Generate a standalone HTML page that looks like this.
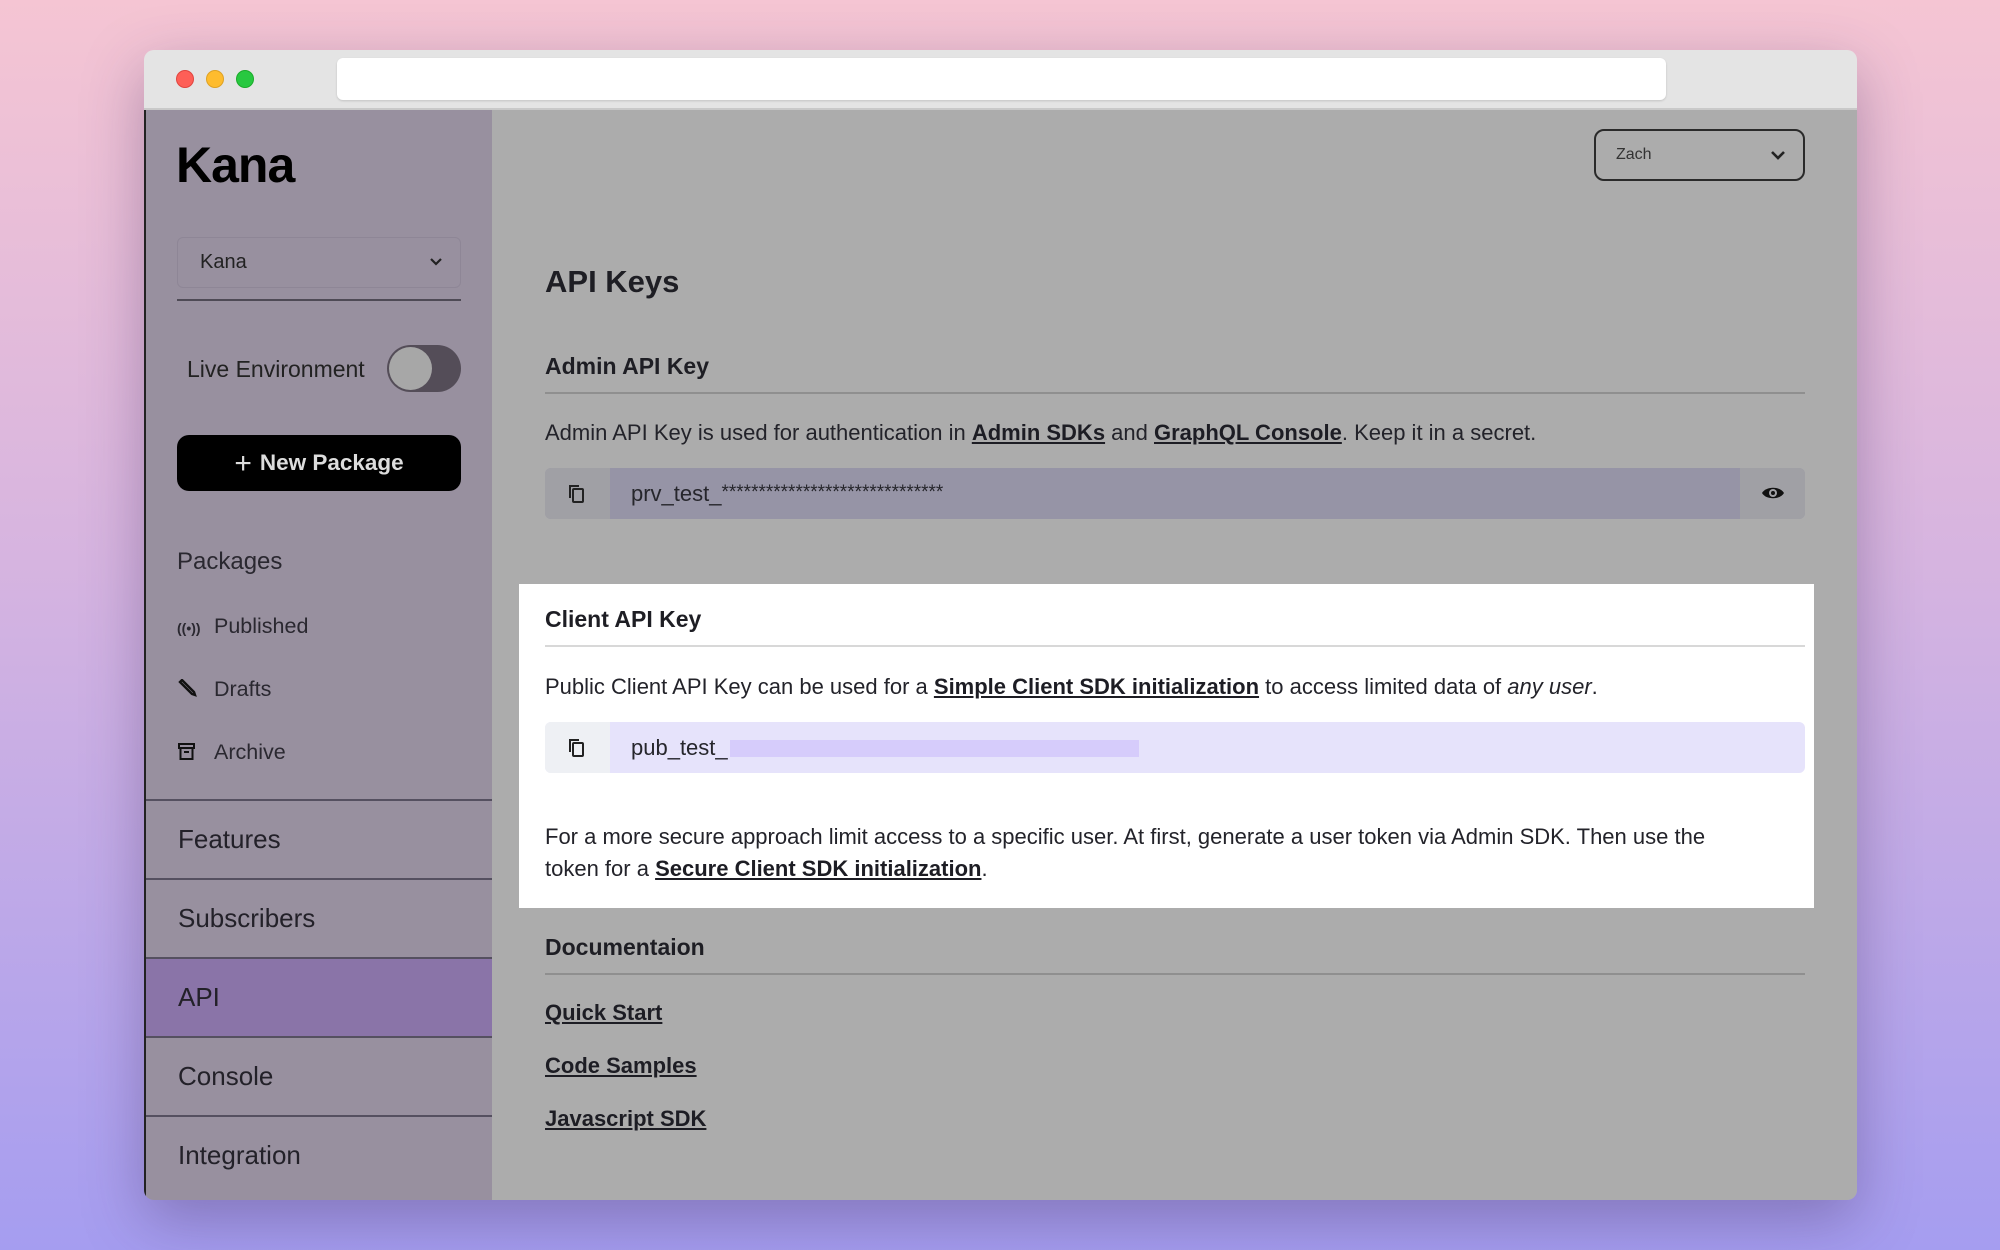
<!DOCTYPE html>
<html><head><meta charset="utf-8"><style>
*{margin:0;padding:0;box-sizing:border-box}
body{width:2000px;height:1250px;overflow:hidden;font-family:"Liberation Sans",sans-serif;background:linear-gradient(180deg,#f5c5d3 0%,#d6b4e0 45%,#a59df0 100%);position:relative;color:#1d1d24}
.win{position:absolute;left:144px;top:50px;width:1713px;height:1150px;border-radius:10px;overflow:hidden;box-shadow:0 20px 60px rgba(60,40,90,.35)}
.bar{position:absolute;left:0;top:0;width:100%;height:60px;background:#e4e4e4;border-bottom:2px solid #c9c9c9}
.dot{position:absolute;top:20px;width:18px;height:18px;border-radius:50%}
.url{position:absolute;left:193px;top:8px;width:1329px;height:42px;background:#fff;border-radius:6px;box-shadow:0 1px 2px rgba(0,0,0,.15)}
.side{position:absolute;left:0;top:60px;width:348px;height:1090px;background:#98909f;border-left:2px solid #222}
.main{position:absolute;left:348px;top:60px;width:1365px;height:1090px;background:#acacac}
.abs{position:absolute}
.nav{position:absolute;left:0;width:348px;height:79px;border-top:2px solid #555060;font-size:26px;padding-left:32px;line-height:77px;color:#232129}
.line{position:absolute;height:2px;background:#8f8f8f}
a{color:#1d1d24;font-weight:bold;text-decoration:underline}
.p{position:absolute;font-size:22px;color:#23232a;white-space:nowrap}
</style></head><body>
<div class="win">
 <div class="bar">
  <div class="dot" style="left:32px;background:#fe5f57;border:1px solid #e0443e"></div>
  <div class="dot" style="left:62px;background:#febc2e;border:1px solid #dea123"></div>
  <div class="dot" style="left:92px;background:#28c840;border:1px solid #1aab29"></div>
  <div class="url"></div>
 </div>
 <div class="side">
  <div class="abs" style="left:30px;top:26px;font-size:50px;font-weight:bold;color:#000;letter-spacing:-1px">Kana</div>
  <div class="abs" style="left:31px;top:127px;width:284px;height:51px;border:1px solid #8e8696;border-radius:6px;font-size:20px;padding-left:22px;line-height:49px;color:#222">Kana
   <svg style="position:absolute;right:16px;top:18px" width="16" height="12" viewBox="0 0 16 12"><path d="M3 3l5 5 5-5" stroke="#222" stroke-width="2.2" fill="none"/></svg></div>
  <div class="abs" style="left:31px;top:189px;width:284px;height:2px;background:#4e4a55"></div>
  <div class="abs" style="left:41px;top:246px;font-size:23px;color:#222">Live Environment</div>
  <div class="abs" style="left:241px;top:235px;width:74px;height:47px;border-radius:24px;background:#544d58"><div style="position:absolute;left:2px;top:2px;width:43px;height:43px;border-radius:50%;background:#a7a7a7"></div></div>
  <div class="abs" style="left:31px;top:325px;width:284px;height:56px;border-radius:12px;background:#000;color:#ddd;font-size:22.5px;font-weight:bold;text-align:center;line-height:56px"><span style="font-weight:normal;font-size:30px;vertical-align:-3px;margin-right:8px">+</span>New Package</div>
  <div class="abs" style="left:31px;top:438px;font-size:24px;color:#2a2830">Packages</div>
  <div class="abs" style="left:31px;top:504px;font-size:21.5px;color:#2a2830"><span style="font-size:14px;font-weight:bold;display:inline-block;width:37px">((•))</span>Published</div>
  <div class="abs" style="left:31px;top:567px;font-size:21.5px;color:#2a2830"><svg width="37" height="20" viewBox="0 0 37 20" style="vertical-align:-3px"><path d="M3 3l12 12 3 1-1-3L5 1z" fill="none" stroke="#111" stroke-width="2.4"/></svg>Drafts</div>
  <div class="abs" style="left:31px;top:630px;font-size:21.5px;color:#2a2830"><svg width="37" height="20" viewBox="0 0 37 20" style="vertical-align:-3px"><rect x="2" y="2" width="15" height="4" fill="none" stroke="#111" stroke-width="2"/><rect x="3.5" y="6" width="12" height="11" fill="none" stroke="#111" stroke-width="2"/><path d="M7 10h5" stroke="#111" stroke-width="2"/></svg>Archive</div>
  <div class="nav" style="top:689px">Features</div>
  <div class="nav" style="top:768px">Subscribers</div>
  <div class="nav" style="top:847px;background:#8a74a8">API</div>
  <div class="nav" style="top:926px">Console</div>
  <div class="nav" style="top:1005px">Integration</div>
 </div>
 <div class="main">
  <div class="abs" style="left:1102px;top:19px;width:211px;height:52px;border:2px solid #2a2a2a;border-radius:10px;font-size:16px;padding-left:20px;line-height:48px;color:#333">Zach
   <svg style="position:absolute;right:16px;top:18px" width="18" height="12" viewBox="0 0 18 12"><path d="M3 3l6 6 6-6" stroke="#222" stroke-width="2.6" fill="none"/></svg></div>
  <div class="abs" style="left:53px;top:154px;font-size:31px;font-weight:bold;color:#1e1e24">API Keys</div>
  <div class="abs" style="left:53px;top:243px;font-size:23px;font-weight:bold;color:#1e1e24">Admin API Key</div>
  <div class="line" style="left:53px;top:282px;width:1260px"></div>
  <div class="p" style="left:53px;top:310px">Admin API Key is used for authentication in <a>Admin SDKs</a> and <a>GraphQL Console</a>. Keep it in a secret.</div>
  <div class="abs" style="left:53px;top:358px;width:1260px;height:51px;border-radius:6px;background:#9694a6;overflow:hidden">
   <div class="abs" style="left:0;top:0;width:65px;height:51px;background:#a0a0a5"></div>
   <div class="abs" style="right:0;top:0;width:65px;height:51px;background:#a0a0a5"></div>
   <svg class="abs" style="left:22px;top:15px" width="20" height="22" viewBox="0 0 20 22"><path d="M3 15V3h9" stroke="#222" stroke-width="2" fill="none"/><rect x="6" y="6" width="10" height="13" rx="1" fill="none" stroke="#222" stroke-width="2"/></svg>
   <svg class="abs" style="right:20px;top:17px" width="24" height="16" viewBox="0 0 24 16"><path d="M1 8C5 1 19 1 23 8 19 15 5 15 1 8z" fill="#111"/><circle cx="12" cy="8" r="4" fill="#a0a0a5"/><circle cx="12" cy="8" r="2" fill="#111"/></svg>
   <div class="abs" style="left:86px;top:13px;font-size:22px;color:#26262c">prv_test_<span style="font-size:19px;vertical-align:3px">******************************</span></div>
  </div>
  <div class="abs" style="left:27px;top:474px;width:1295px;height:324px;background:#fff"></div>
  <div class="abs" style="left:53px;top:496px;font-size:23px;font-weight:bold;color:#1e1e24">Client API Key</div>
  <div class="abs" style="left:53px;top:535px;width:1260px;height:2px;background:#d8d8d8"></div>
  <div class="p" style="left:53px;top:564px">Public Client API Key can be used for a <a>Simple Client SDK initialization</a> to access limited data of <i>any user</i>.</div>
  <div class="abs" style="left:53px;top:612px;width:1260px;height:51px;border-radius:6px;background:#e6e3fb;overflow:hidden">
   <div class="abs" style="left:0;top:0;width:65px;height:51px;background:#eef0f4"></div>
   <svg class="abs" style="left:22px;top:15px" width="20" height="22" viewBox="0 0 20 22"><path d="M3 15V3h9" stroke="#222" stroke-width="2" fill="none"/><rect x="6" y="6" width="10" height="13" rx="1" fill="none" stroke="#222" stroke-width="2"/></svg>
   <div class="abs" style="left:86px;top:13px;font-size:22px;color:#26262c">pub_test_</div>
   <div class="abs" style="left:185px;top:18px;width:409px;height:17px;background:#d6ccfb"></div>
  </div>
  <div class="p" style="left:53px;top:711px;line-height:32px">For a more secure approach limit access to a specific user. At first, generate a user token via Admin SDK. Then use the<br>token for a <a>Secure Client SDK initialization</a>.</div>
  <div class="abs" style="left:53px;top:824px;font-size:23px;font-weight:bold;color:#1e1e24">Documentaion</div>
  <div class="line" style="left:53px;top:863px;width:1260px"></div>
  <div class="p" style="left:53px;top:890px"><a>Quick Start</a></div>
  <div class="p" style="left:53px;top:943px"><a>Code Samples</a></div>
  <div class="p" style="left:53px;top:996px"><a>Javascript SDK</a></div>
 </div>
</div>
</body></html>
